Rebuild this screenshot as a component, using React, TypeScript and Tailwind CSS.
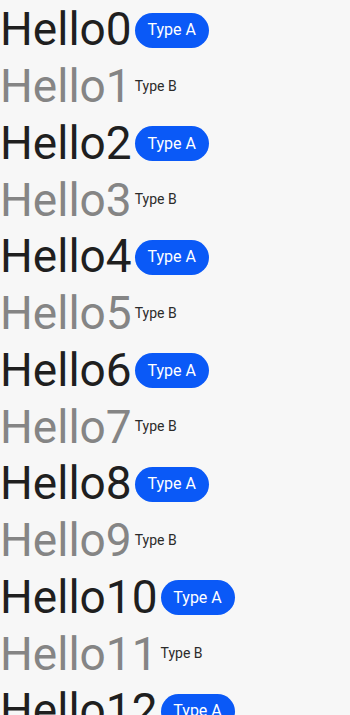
import React from 'react';

const items = Array.from({ length: 13 }, (_, i) => i);

export default function App() {
  return (
    <div className="h-[715px] w-full overflow-hidden bg-[#f7f7f7] pt-[1px] font-['Roboto',sans-serif]">
      {items.map((i) => {
        const isA = i % 2 === 0;
        return (
          <div key={i} className="flex h-[56.75px] items-center">
            <span
              className={
                isA
                  ? 'text-[46px] leading-none text-[#1f1f1f]'
                  : 'text-[46px] leading-none text-[#858585]'
              }
            >
              Hello{i}
            </span>
            {isA ? (
              <span className="ml-[3px] mt-[2px] flex h-[35px] w-[74px] items-center justify-center rounded-full bg-[#0a59f7] text-[16px] text-white">
                Type A
              </span>
            ) : (
              <span className="ml-[3px] text-[14px] text-[#2b2b2b]">Type B</span>
            )}
          </div>
        );
      })}
    </div>
  );
}
